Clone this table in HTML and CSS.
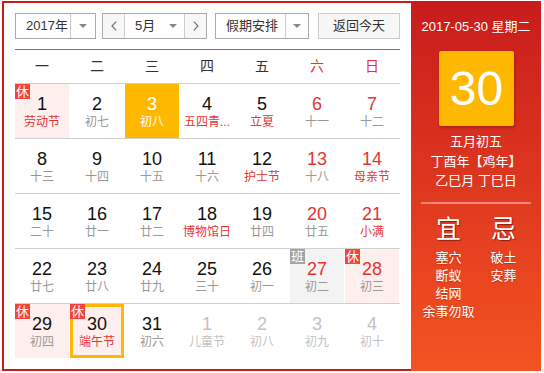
FILE: index.html
```html
<!DOCTYPE html>
<html lang="zh-CN">
<head>
<meta charset="utf-8">
<title>万年历</title>
<link rel="stylesheet" href="styles.css">
</head>
<body>
<div class="cal">
  <div class="left">
    <div class="bar">
      <div class="box year">
        <div class="txt">2017年</div>
        <div class="arr"><span class="tri"></span></div>
      </div>
      <div class="box month">
        <div class="nav prev"><svg width="6" height="10" viewBox="0 0 6 10"><path d="M5.2 0.6 L1 5 L5.2 9.4" fill="none" stroke="#777" stroke-width="1.3"/></svg></div>
        <div class="mid"><span>5月</span><span class="tri"></span></div>
        <div class="nav next"><svg width="6" height="10" viewBox="0 0 6 10"><path d="M0.8 0.6 L5 5 L0.8 9.4" fill="none" stroke="#777" stroke-width="1.3"/></svg></div>
      </div>
      <div class="box holi">
        <div class="txt">假期安排</div>
        <div class="arr"><span class="tri"></span></div>
      </div>
      <div class="box today">返回今天</div>
    </div>
    <div class="rule"></div>
    <div class="head">
      <div>一</div><div>二</div><div>三</div><div>四</div><div>五</div><div class="wkend">六</div><div class="wkend">日</div>
    </div>
    <div class="week">
      <div class="cell rest"><span class="badge">休</span><div class="num">1</div><div class="lunar hol">劳动节</div></div>
      <div class="cell"><div class="num">2</div><div class="lunar">初七</div></div>
      <div class="cell sel"><div class="num">3</div><div class="lunar">初八</div></div>
      <div class="cell"><div class="num">4</div><div class="lunar hol">五四青...</div></div>
      <div class="cell"><div class="num">5</div><div class="lunar hol">立夏</div></div>
      <div class="cell red"><div class="num">6</div><div class="lunar">十一</div></div>
      <div class="cell red"><div class="num">7</div><div class="lunar">十二</div></div>
    </div>
    <div class="week">
      <div class="cell"><div class="num">8</div><div class="lunar">十三</div></div>
      <div class="cell"><div class="num">9</div><div class="lunar">十四</div></div>
      <div class="cell"><div class="num">10</div><div class="lunar">十五</div></div>
      <div class="cell"><div class="num">11</div><div class="lunar">十六</div></div>
      <div class="cell"><div class="num">12</div><div class="lunar hol">护士节</div></div>
      <div class="cell red"><div class="num">13</div><div class="lunar">十八</div></div>
      <div class="cell red"><div class="num">14</div><div class="lunar hol">母亲节</div></div>
    </div>
    <div class="week">
      <div class="cell"><div class="num">15</div><div class="lunar">二十</div></div>
      <div class="cell"><div class="num">16</div><div class="lunar">廿一</div></div>
      <div class="cell"><div class="num">17</div><div class="lunar">廿二</div></div>
      <div class="cell"><div class="num">18</div><div class="lunar hol">博物馆日</div></div>
      <div class="cell"><div class="num">19</div><div class="lunar">廿四</div></div>
      <div class="cell red"><div class="num">20</div><div class="lunar">廿五</div></div>
      <div class="cell red"><div class="num">21</div><div class="lunar hol">小满</div></div>
    </div>
    <div class="week">
      <div class="cell"><div class="num">22</div><div class="lunar">廿七</div></div>
      <div class="cell"><div class="num">23</div><div class="lunar">廿八</div></div>
      <div class="cell"><div class="num">24</div><div class="lunar">廿九</div></div>
      <div class="cell"><div class="num">25</div><div class="lunar">三十</div></div>
      <div class="cell"><div class="num">26</div><div class="lunar">初一</div></div>
      <div class="cell red work"><span class="badge gray">班</span><div class="num">27</div><div class="lunar">初二</div></div>
      <div class="cell red rest"><span class="badge">休</span><div class="num">28</div><div class="lunar">初三</div></div>
    </div>
    <div class="week">
      <div class="cell rest"><span class="badge">休</span><div class="num">29</div><div class="lunar">初四</div></div>
      <div class="cell rest cur"><span class="badge">休</span><div class="num">30</div><div class="lunar hol">端午节</div></div>
      <div class="cell"><div class="num">31</div><div class="lunar">初六</div></div>
      <div class="cell other"><div class="num">1</div><div class="lunar">儿童节</div></div>
      <div class="cell other"><div class="num">2</div><div class="lunar">初八</div></div>
      <div class="cell other"><div class="num">3</div><div class="lunar">初九</div></div>
      <div class="cell other"><div class="num">4</div><div class="lunar">初十</div></div>
    </div>
  </div>
  <div class="panel">
    <div class="date">2017-05-30 星期二</div>
    <div class="big">30</div>
    <div class="info">五月初五<br>丁酉年【鸡年】<br>乙巳月 丁巳日</div>
    <div class="divider"></div>
    <div class="yiji">
      <div class="col"><div class="yj">宜</div><div class="items">塞穴<br>断蚁<br>结网<br>余事勿取</div></div>
      <div class="col"><div class="yj">忌</div><div class="items">破土<br>安葬</div></div>
    </div>
  </div>
</div>
</body>
</html>
```
FILE: styles.css
```css
body {
  margin: 0;
  background: #fff;
  font-family: "Liberation Sans", "Noto Sans CJK SC", sans-serif;
}
.cal {
  display: flex;
  margin: 1px 0 0 2px;
  width: 539px;
  height: 370px;
}
.left {
  box-sizing: border-box;
  width: 409px;
  height: 370px;
  border: 2px solid #c81c1c;
  border-right: 0;
  padding: 10px 11px 0;
}
.bar {
  display: flex;
  height: 26px;
  font-size: 13px;
  color: #333;
}
.box {
  box-sizing: border-box;
  height: 26px;
  border: 1px solid #aaa;
  display: flex;
  background: #fff;
  line-height: 24px;
}
.year { width: 81px; margin-right: 6px; }
.month { width: 105px; margin-right: 8px; }
.holi { width: 94px; margin-right: 9px; }
.today {
  width: 82px;
  border-color: #ccc;
  background: #f7f7f7;
  justify-content: center;
}
.txt {
  box-sizing: border-box;
  padding-left: 10px;
  border-right: 1px solid #ccc;
}
.year .txt { width: 55px; }
.holi .txt { width: 70px; }
.arr {
  flex: 1;
  display: flex;
  align-items: center;
  justify-content: center;
}
.tri {
  width: 0;
  height: 0;
  border-left: 4px solid transparent;
  border-right: 4px solid transparent;
  border-top: 4px solid #888;
}
.nav {
  box-sizing: border-box;
  width: 21px;
  background: #f7f7f7;
  display: flex;
  align-items: center;
  justify-content: center;
}
.prev { width: 22px; border-right: 1px solid #ccc; }
.mid {
  box-sizing: border-box;
  width: 60px;
  border-right: 1px solid #ccc;
  display: flex;
  align-items: center;
  justify-content: space-between;
  padding: 0 7px 0 10px;
}
.rule {
  height: 1px;
  background: #e2483c;
  margin-top: 10px;
}
.head, .week {
  display: grid;
  grid-template-columns: repeat(7, 54px);
  column-gap: 1px;
}
.head {
  height: 33px;
  line-height: 33px;
  font-size: 14px;
  color: #333;
  text-align: center;
}
.head .wkend { color: #e53333; }
.week { border-top: 1px solid #d0d0d0; }
.cell {
  position: relative;
  box-sizing: border-box;
  height: 54px;
  padding-top: 10px;
  text-align: center;
}
.num {
  font-size: 18px;
  line-height: 21px;
  color: #111;
}
.lunar {
  font-size: 12px;
  line-height: 15px;
  color: #999;
  white-space: nowrap;
  overflow: hidden;
}
.lunar.hol { color: #e53535; }
.red .num { color: #e53333; }
.rest { background: #fdefee; }
.work { background: #f3f3f3; }
.sel { background: #ffb800; }
.sel .num, .sel .lunar { color: #fff; }
.cur { box-shadow: inset 0 0 0 3px #ffb800; }
.other .num, .other .lunar { color: #c2c2c2; }
.badge {
  position: absolute;
  left: 0;
  top: 0;
  width: 15px;
  height: 15px;
  line-height: 15px;
  font-size: 13px;
  color: #fff;
  background: #f5443a;
  text-align: center;
}
.badge.gray { background: #a3a3a3; }
.panel {
  width: 130px;
  height: 370px;
  background: linear-gradient(#c81c1c, #f45322);
  color: #fff;
  text-align: center;
}
.date {
  padding-top: 16px;
  font-size: 13px;
  line-height: 20px;
}
.big {
  width: 75px;
  height: 75px;
  margin: 14px 0 0 28px;
  background: #ffb800;
  border-radius: 2px;
  box-shadow: 1px 2px 3px rgba(110, 0, 0, 0.35);
  font-size: 48px;
  line-height: 75px;
}
.info {
  margin-top: 6px;
  font-size: 13px;
  line-height: 19.5px;
}
.divider {
  width: 110px;
  height: 2px;
  margin: 11px auto 0;
  background: rgba(255, 255, 255, 0.4);
}
.yiji {
  display: grid;
  grid-template-columns: 55px 55px;
  justify-content: center;
  margin-top: 10px;
}
.yj {
  font-size: 25px;
  line-height: 30px;
  text-shadow: 1px 1px 1px rgba(90, 0, 0, 0.6);
}
.items {
  margin-top: 5px;
  font-size: 13px;
  line-height: 18px;
  white-space: nowrap;
  text-shadow: 0 1px 1px rgba(90, 0, 0, 0.25);
}
```
